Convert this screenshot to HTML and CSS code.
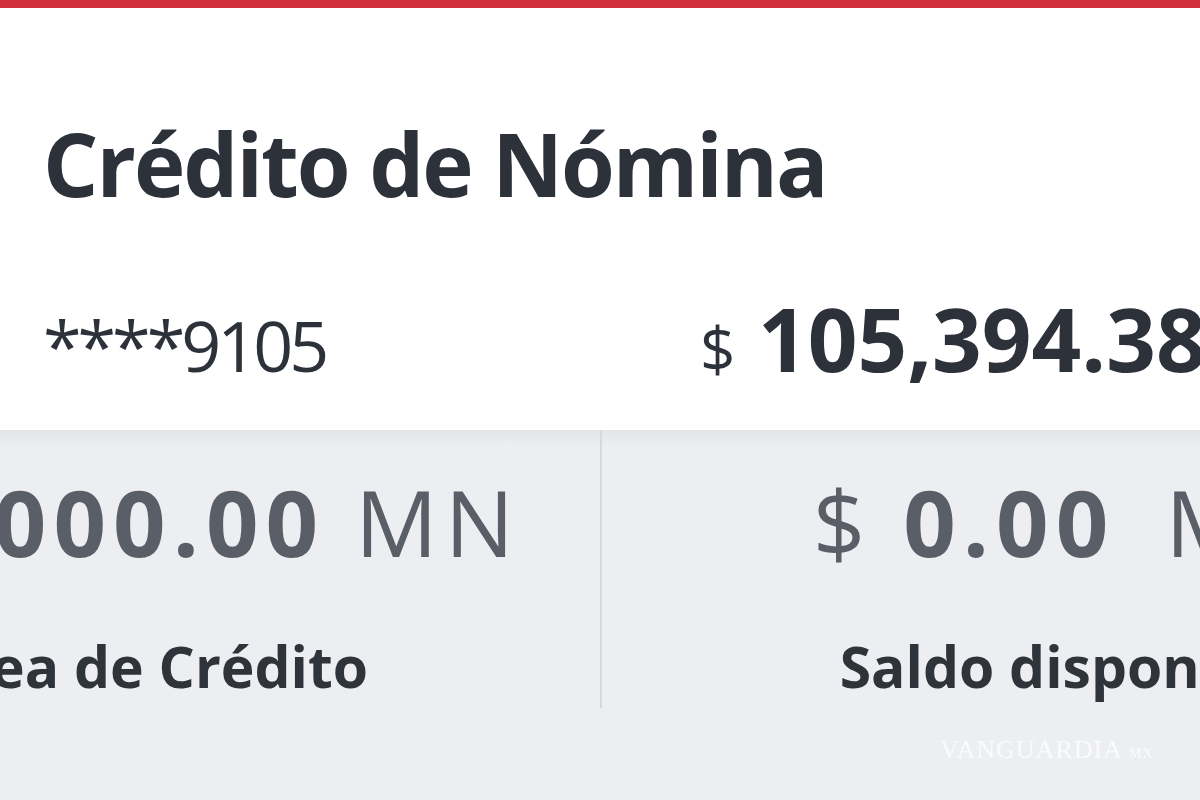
FILE: index.html
```html
<!DOCTYPE html>
<html lang="es">
<head>
    <meta charset="UTF-8">
    <meta name="viewport" content="width=device-width, initial-scale=1.0">
    <title>Crédito de Nómina</title>
    <link rel="stylesheet" href="styles.css">
</head>
<body>

<div class="topbar"></div>

<section class="account">
    <h1 class="account-title">Crédito de Nómina</h1>
    <div class="account-row">
        <span class="account-number">****9105</span>
        <span class="account-balance"><span class="currency">$</span> 105,394.38 <span class="unit">MN</span></span>
    </div>
</section>

<section class="stats">
    <div class="stat">
        <div class="stat-amount"><span class="currency">$</span> 30,000.00<span class="unit">MN</span></div>
        <div class="stat-label">Línea de Crédito</div>
    </div>
    <div class="stat stat-right">
        <div class="stat-amount"><span class="currency">$</span> 0.00<span class="unit">MN</span></div>
        <div class="stat-label">Saldo disponible</div>
    </div>
</section>

<div class="watermark">VANGUARDIA <small>MX</small></div>

</body>
</html>
```

FILE: styles.css
```css
html, body {
    margin: 0;
    padding: 0;
    height: 100%;
}
body {
    font-family: 'Open Sans', 'Lato', sans-serif;
    background-color: #eceef1;
    color: #2d323a;
    overflow: hidden;
    position: relative;
}
.topbar {
    height: 8px;
    background-color: #cf2f3a;
    box-shadow: 0 1px 3px rgba(160, 30, 40, 0.35);
}
.account {
    background-color: #fff;
    height: 422px;
    padding: 0 0 0 43px;
    box-sizing: border-box;
    overflow: hidden;
}
.account-title {
    margin: 0;
    padding-top: 112px;
    font-size: 87px;
    font-weight: 700;
    line-height: 1;
    letter-spacing: -2px;
    white-space: nowrap;
}
.account-row {
    display: flex;
    align-items: baseline;
    margin-top: 72px;
    white-space: nowrap;
}
.account-number {
    font-size: 70px;
    font-weight: 400;
    letter-spacing: -4px;
    width: 657px;
    flex-shrink: 0;
}
.account-balance {
    font-size: 87px;
    font-weight: 700;
}
.account-balance .currency {
    font-size: 62px;
    font-weight: 400;
}
.stats {
    display: grid;
    grid-template-columns: 928px 1fr;
    width: 1870px;
    margin-left: -328px;
    height: 370px;
    background: linear-gradient(#e3e5e9, #eceef1 16px);
}
.stat {
    text-align: center;
    white-space: nowrap;
    padding-top: 37px;
    height: 278px;
    box-sizing: border-box;
}
.stat-right {
    border-left: 2px solid #d5d8dc;
}
.stat-amount {
    font-size: 92px;
    font-weight: 700;
    color: #5a5f67;
    line-height: 1.2;
    letter-spacing: 7px;
}
.stat-amount .currency,
.stat-amount .unit {
    font-weight: 400;
}
.stat-amount .unit {
    margin-left: 30px;
}
.stat-right .stat-amount .unit {
    margin-left: 50px;
}
.stat-label {
    font-size: 57px;
    font-weight: 700;
    color: #2f343b;
    margin-top: 50px;
}
.watermark {
    position: absolute;
    left: 940px;
    top: 735px;
    font-family: 'Liberation Serif', serif;
    font-size: 26px;
    letter-spacing: 1px;
    color: rgba(255, 255, 255, 0.8);
}
.watermark small {
    font-size: 14px;
}
```
